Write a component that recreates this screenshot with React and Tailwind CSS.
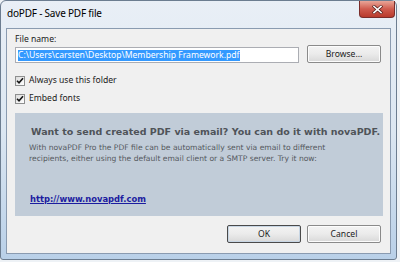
import React from "react";

function Check() {
  return (
    <div className="w-[10px] h-[10px] border border-[#8e8f8f] bg-gradient-to-br from-[#dcdcdc] to-[#ffffff] flex items-center justify-center">
      <svg width="8" height="8" viewBox="0 0 8 8">
        <path d="M1 3.8 L3 5.8 L7 1.2" fill="none" stroke="#151515" strokeWidth="1.6" />
      </svg>
    </div>
  );
}

function Btn({ children, def }) {
  return (
    <div
      className={
        "w-[74px] h-[18px] rounded-[2px] border flex items-center justify-center text-[8.6px] text-[#1a1a1a] bg-gradient-to-b from-[#f3f3f3] via-[#ebebeb] to-[#d8d8d8] " +
        (def ? "border-[#4a4a4a] shadow-[inset_0_0_0_1px_#c8d6e4]" : "border-[#8a8a8a] shadow-[inset_0_0_0_1px_#fcfcfc]")
      }
    >
      {children}
    </div>
  );
}

export default function App() {
  const ui = { fontFamily: '"Noto Sans", "Open Sans", sans-serif' };
  const tah = { fontFamily: '"DejaVu Sans", Verdana, sans-serif' };
  return (
    <div className="w-[400px] h-[262px] bg-[#eef2f6] overflow-hidden" style={ui}>
      <div className="w-[397px] h-[260px] rounded-t-[6px] rounded-b-[3px] border border-[#6c7d90] bg-gradient-to-b from-[#e9eff6] via-[#dce7f2] to-[#b9d0e8] flex flex-col">
        <div className="h-[27px] flex items-start justify-between">
          <div className="pl-[6px] pt-[6px] text-[10px] leading-[12px] text-black tracking-[-0.2px]">doPDF - Save PDF file</div>
          <div className="mr-[1px] w-[36px] h-[17px] rounded-b-[4px] border border-t-0 border-[#7a2d2a] bg-gradient-to-b from-[#e8a598] via-[#cf5b4e] to-[#b83a2c] flex items-center justify-center">
            <svg width="11" height="9" viewBox="0 0 11 9">
              <path d="M2 1.5 L9 7.5 M9 1.5 L2 7.5" stroke="#5a2320" strokeWidth="3" strokeLinecap="square" />
              <path d="M2 1.5 L9 7.5 M9 1.5 L2 7.5" stroke="#ffffff" strokeWidth="1.6" strokeLinecap="square" />
            </svg>
          </div>
        </div>
        <div className="mx-[5px] h-[226px] border border-[#8a9bb0] bg-[#f0f0f0] flex flex-col pl-[8px] pr-[9px]">
          <div className="pt-[5px] text-[8.6px] leading-[11px] text-[#1a1a1a]">File name:</div>
          <div className="flex items-end justify-between h-[18px]">
            <div className="w-[284px] h-[16px] border border-[#abadb3] bg-white flex items-center pl-[2px] text-[8.6px] leading-[11px]">
              <span className="bg-[#3399ff] text-white">C:\Users\carsten\Desktop\Membership Framework.pdf</span>
            </div>
            <Btn>Browse...</Btn>
          </div>
          <div className="mt-[12px] flex items-center gap-[4px] h-[11px] text-[8.6px] text-[#1a1a1a]">
            <Check />
            <span>Always use this folder</span>
          </div>
          <div className="mt-[7px] flex items-center gap-[4px] h-[11px] text-[8.6px] text-[#1a1a1a]">
            <Check />
            <span>Embed fonts</span>
          </div>
          <div className="mt-[9px] w-[368px] h-[103px] bg-[#c1ccd8] flex flex-col pl-[14px]" style={tah}>
            <div className="pt-[12px] pl-[2px] text-[9.5px] leading-[13px] font-bold text-[#4f5358]">
              Want to send created PDF via email? You can do it with novaPDF.
            </div>
            <div className="mt-[5px] text-[7.6px] leading-[10.5px] text-[#55595e]">
              With novaPDF Pro the PDF file can be automatically sent via email to different<br />
              recipients, either using the default email client or a SMTP server. Try it now:
            </div>
            <div className="mt-[30px] pl-[1px] text-[8.4px] leading-[11px] font-bold text-[#1c1ca0] underline">
              http://www.novapdf.com
            </div>
          </div>
          <div className="mt-[9px] flex justify-end gap-[6px]">
            <Btn def>OK</Btn>
            <Btn>Cancel</Btn>
          </div>
        </div>
      </div>
    </div>
  );
}
